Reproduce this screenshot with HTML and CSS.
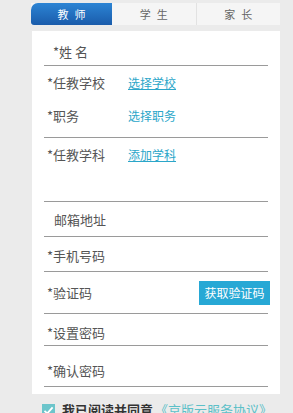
FILE: index.html
```html
<!DOCTYPE html>
<html>
<head>
<meta name="viewport" content="width=device-width, initial-scale=1">
<link rel="stylesheet" href="styles.css">
</head>
<body>

<div class="page">
  <div class="tabs">
    <div class="tab active">教师</div>
    <div class="tab">学生</div>
    <div class="tab last">家长</div>
  </div>

  <div class="card">
    <div class="row row-name"><span class="label name">*姓 名</span></div>

    <div class="row row-school">
      <div class="line"><span class="label">*任教学校</span><a class="link under">选择学校</a></div>
      <div class="line second"><span class="label">*职务</span><a class="link">选择职务</a></div>
    </div>

    <div class="row row-subject"><span class="label">*任教学科</span><a class="link under">添加学科</a></div>

    <div class="row row-mail"><span class="label plain">邮箱地址</span></div>

    <div class="row row-phone"><span class="label">*手机号码</span></div>

    <div class="row row-code">
      <span class="label">*验证码</span>
      <button type="button" class="codebtn">获取验证码</button>
    </div>

    <div class="row row-pwd"><span class="label">*设置密码</span></div>

    <div class="row row-pwd2"><span class="label">*确认密码</span></div>
  </div>

  <div class="agree">
    <span class="check">
      <svg width="13" height="13" viewBox="0 0 13 13"><path d="M2.5 6.8 L5.3 9.4 L10.6 3.4" fill="none" stroke="#fff" stroke-width="1.8"/></svg>
    </span>
    <span class="agree-text">我已阅读并同意</span>
    <a class="agree-link">《京版云服务协议》</a>
  </div>
</div>

</body>
</html>
```

FILE: styles.css
```css
* {
  box-sizing: border-box;
}

body {
  margin: 0;
  background: #ebebeb;
  font-family: "Noto Sans CJK SC", "Noto Sans", sans-serif;
  color: #555;
  overflow: hidden;
}

.page {
  padding: 3px 13px 0 31px;
}

.tabs {
  display: flex;
  height: 22px;
  background: #f5f5f5;
}

.tab {
  flex: 1;
  text-align: center;
  font-size: 11px;
  line-height: 22px;
  letter-spacing: 6px;
  text-indent: 6px;
  color: #666;
  position: relative;
}

.tab.last {
  border-left: 1px solid #e2e2e2;
}

.tab.active {
  flex: 0 0 81px;
  color: #fff;
  background: linear-gradient(#2c84d4, #1a5cab);
  border-radius: 7px 0 0 3px;
}

.card {
  margin: 6px 0 0 1px;
  background: #fff;
  padding: 0 12px 7px 12px;
}

.row {
  border-bottom: 1px solid #9a9a9a;
  padding-left: 3px;
  font-size: 13px;
  line-height: 18px;
}

.line {
  display: flex;
  align-items: center;
}

.line.second {
  margin-top: 15px;
}

.label {
  display: inline-block;
  width: 81px;
  flex: none;
}

.label.name {
  padding-left: 6px;
}

.label.plain {
  padding-left: 7px;
}

.link {
  font-size: 12px;
  color: #2ba6c9;
}

.link.under {
  text-decoration: underline;
}

.row-name { height: 35px; padding-top: 12px; }
.row-school { height: 72px; padding-top: 8px; }
.row-subject { height: 64px; padding-top: 8px; display: flex; align-items: flex-start; }
.row-mail { height: 35px; padding-top: 9px; }
.row-phone { height: 35px; padding-top: 10px; }
.row-pwd { height: 32px; padding-top: 10px; }
.row-pwd2 { height: 41px; padding-top: 16px; }

.row-code {
  height: 42px;
  display: flex;
  align-items: center;
  justify-content: space-between;
}

.codebtn {
  margin-right: -2px;
  width: 71px;
  height: 24px;
  border: none;
  background: #27a8d5;
  color: #fff;
  font-family: "Noto Sans CJK SC", sans-serif;
  font-size: 12px;
  padding: 0;
}

.agree {
  display: flex;
  align-items: center;
  margin-top: 8px;
  padding-left: 11px;
  font-size: 13px;
  line-height: 16px;
}

.check {
  width: 13px;
  height: 13px;
  background: #6cc5cb;
  display: inline-block;
  margin-right: 7px;
}

.check svg {
  display: block;
}

.agree-text {
  font-weight: bold;
  color: #333;
}

.agree-link {
  color: #5cc0c8;
  margin-left: 2px;
}
```
